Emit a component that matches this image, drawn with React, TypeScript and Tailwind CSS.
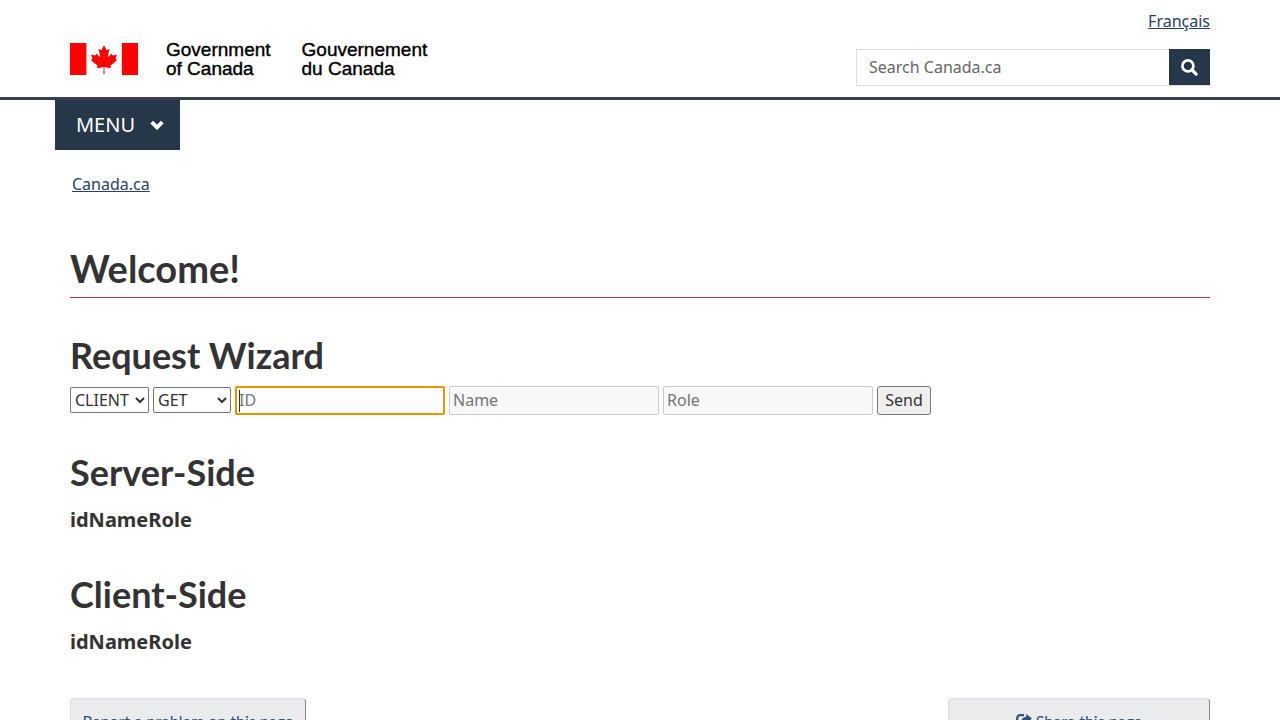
import React from "react";

function Flag() {
  return (
    <svg width="68" height="32" viewBox="0 0 68 32" aria-hidden="true" className="shrink-0">
      <path fill="#f00" d="M0 0h16.4v32H0zM51.9 0H68v32H51.9z" />
      <path
        fill="#f00"
        transform="translate(-0.27 -0.64) scale(0.00714)"
        d="m4890 4430-45-863a95 95 0 0 1 111-98l859 151-116-320a65 65 0 0 1 20-73l941-762-212-99a65 65 0 0 1-34-79l186-572-542 115a65 65 0 0 1-73-38l-105-247-423 454a65 65 0 0 1-111-57l204-1052-327 189a65 65 0 0 1-91-27l-332-652-332 652a65 65 0 0 1-91 27l-327-189 204 1052a65 65 0 0 1-111 57l-423-454-105 247a65 65 0 0 1-73 38l-542-115 186 572a65 65 0 0 1-34 79l-212 99 941 762a65 65 0 0 1 20 73l-116 320 859-151a95 95 0 0 1 111 98l-45 863z"
      />
    </svg>
  );
}

function SearchIcon() {
  return (
    <svg width="17" height="17" viewBox="0 0 18 18" fill="none" stroke="#fff" aria-hidden="true">
      <circle cx="7.3" cy="7.3" r="5.8" strokeWidth="2.8" />
      <path d="M11.6 11.6 16 16" strokeWidth="3.4" strokeLinecap="round" />
    </svg>
  );
}

function ChevronIcon() {
  return (
    <svg width="14" height="10" viewBox="0 0 14 10" fill="none" aria-hidden="true">
      <path d="M1.7 2.2 7 7.4l5.3-5.2" stroke="#fff" strokeWidth="3.8" />
    </svg>
  );
}

function ShareIcon() {
  return (
    <svg width="16" height="16" viewBox="0 0 16 16" fill="none" aria-hidden="true">
      <path d="M8 2.2H4A2.8 2.8 0 0 0 1.2 5v7A2.8 2.8 0 0 0 4 14.8h7a2.8 2.8 0 0 0 2.8-2.8v-1.5" stroke="currentColor" strokeWidth="2.2" />
      <path d="M10.3 1 16 5.6l-5.7 4.7V7.6C7.6 7.5 6 8.4 4.6 11 4.7 6.8 6.8 4 10.3 3.7z" fill="currentColor" />
    </svg>
  );
}

const container = "mx-auto w-full max-w-[1170px] px-[15px]";
const heading2 = "font-['Lato',sans-serif] text-[36px] leading-[40px] font-bold";
const select = "h-[26px] rounded-[2px] border border-[#767676] bg-white";
const field = "h-[29px] w-[210px] rounded-[2px] border border-[#ccc] bg-[#f8f8f8] px-[3px] pb-[2px] placeholder:text-[#757575]";
const focusedField =
  "caret-transparent focus:bg-white focus:outline-2 focus:-outline-offset-2 focus:outline-[#e59700] focus:border-transparent";
const pageButton =
  "flex h-[46px] items-center justify-center gap-1 rounded-[4px] border border-[#dcdee1] border-r-[#888] border-b-[#888] bg-[#eaebed] px-3 font-['Lato',sans-serif] whitespace-nowrap text-[#335075]";

function Results({ title }: { title: string }) {
  return (
    <section>
      <h2 className={heading2}>{title}</h2>
      <p className="mt-[13px] text-[20px] leading-[30px] font-bold">idNameRole</p>
    </section>
  );
}

export default function App() {
  return (
    <div className="bg-white font-['Noto_Sans',sans-serif] text-[16px] leading-[24px] text-[#333]">
      <header>
        <div className="border-b-3 border-[#38414d]">
          <div className={`${container} flex justify-between pb-[11px]`}>
            <div className="flex pt-[43px]">
              <Flag />
              <div className="-mt-[3px] ml-7 flex gap-[31px] font-['Liberation_Sans',sans-serif] text-[19px] leading-[19px] text-black [-webkit-text-stroke:0.4px_black]">
                <p>Government<br />of Canada</p>
                <p>Gouvernement<br />du Canada</p>
              </div>
            </div>
            <div className="flex w-[354px] flex-col pt-[9px]">
              <a href="#fr" lang="fr" className="self-end text-[#284162] underline">Français</a>
              <form role="search" className="mt-4 flex items-start" onSubmit={(e) => e.preventDefault()}>
                <input
                  type="search"
                  aria-label="Search Canada.ca"
                  placeholder="Search Canada.ca"
                  className="h-[37px] min-w-0 flex-1 border border-r-0 border-[#dcdee1] px-3 pb-[2px] placeholder:text-[#666]"
                />
                <div className="border-b border-[#dcdee1]">
                  <button aria-label="Search" className="flex h-9 w-[41px] items-center justify-center bg-[#26374a]">
                    <SearchIcon />
                  </button>
                </div>
              </form>
            </div>
          </div>
        </div>
        <nav aria-label="Menu" className="mx-auto max-w-[1170px]">
          <button className="flex h-[50px] w-[125px] items-center justify-center gap-[15px] bg-[#26374a] pl-[5px] text-[20px] text-white">
            MENU <ChevronIcon />
          </button>
        </nav>
        <nav aria-label="Breadcrumb" className={`${container} pt-[22px]`}>
          <a href="#home" className="ml-[2px] text-[#284162] underline">Canada.ca</a>
        </nav>
      </header>

      <main className={`${container} pt-[50px] pb-10`}>
        <h1 className="border-b border-[#af3c43] pb-[7px] font-['Lato',sans-serif] text-[38px] leading-[44px] font-bold">
          Welcome!
        </h1>
        <section className="pt-[37px]">
          <h2 className={heading2}>Request Wizard</h2>
          <form className="mt-[11px] flex flex-wrap items-start gap-1" onSubmit={(e) => e.preventDefault()}>
            <select aria-label="Side" className={`${select} mt-px w-[79px] pb-px`}>
              <option>CLIENT</option>
              <option>SERVER</option>
            </select>
            <select aria-label="Method" className={`${select} mt-px w-[78px] pb-px`}>
              <option>GET</option>
              <option>POST</option>
            </select>
            <div className="relative flex">
              <input autoFocus aria-label="ID" placeholder="ID" className={`${field} ${focusedField}`} />
              <span aria-hidden="true" className="pointer-events-none absolute top-1 left-1 h-[22px] w-px bg-[#333]" />
            </div>
            <input aria-label="Name" placeholder="Name" className={field} />
            <input aria-label="Role" placeholder="Role" className={field} />
            <button className="h-[29px] w-[54px] rounded-[3px] border border-[#767676] bg-[#efefef] pb-[2px]">Send</button>
          </form>
        </section>
        <div className="mt-[37px] flex flex-col gap-[39px]">
          <Results title="Server-Side" />
          <Results title="Client-Side" />
        </div>
        <div className="mt-[41px] flex justify-between">
          <button className={`${pageButton} w-[236px]`}>Report a problem on this page</button>
          <button className={`${pageButton} w-[262px]`}>
            <ShareIcon /> Share this page
          </button>
        </div>
      </main>
    </div>
  );
}
